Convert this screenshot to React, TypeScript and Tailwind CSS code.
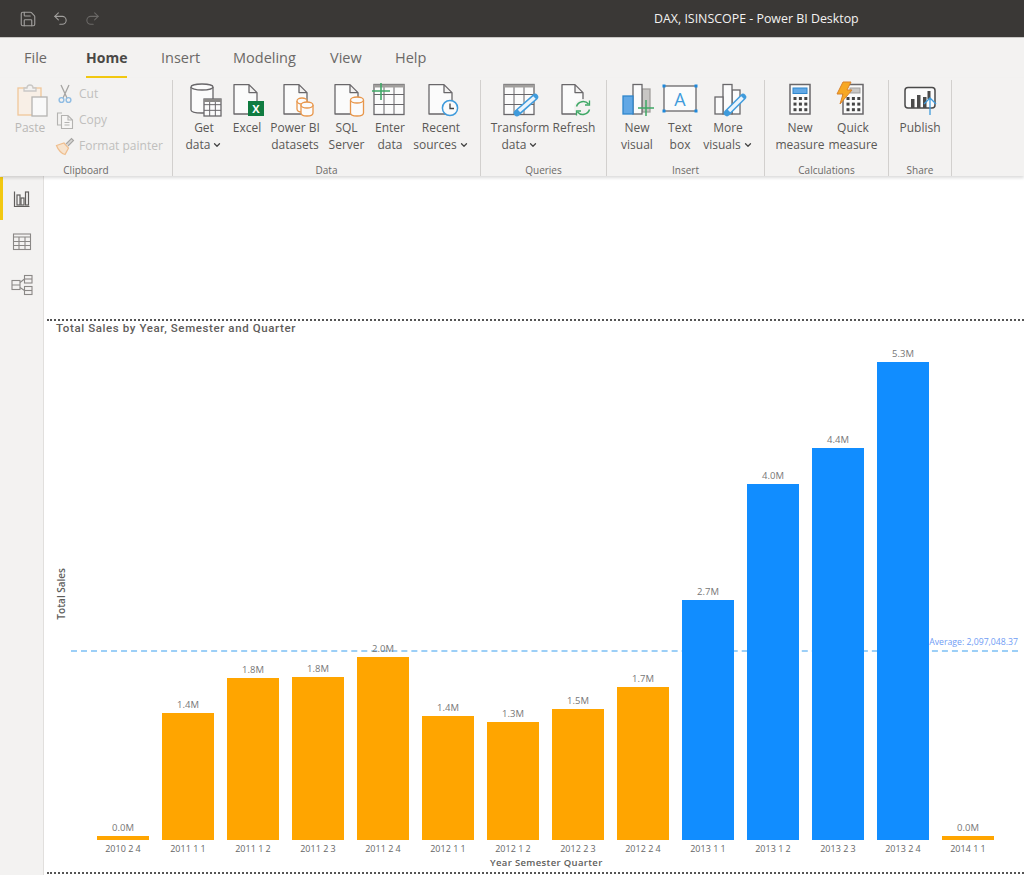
import type { ReactNode } from 'react'
import { ChevronDown, Redo2, Save, Undo2 } from 'lucide-react'

const tabs = [
  { label: 'File', width: 'w-[62px]' },
  { label: 'Home', width: 'w-[75px]', active: true },
  { label: 'Insert', width: 'w-[72px]' },
  { label: 'Modeling', width: 'w-[97px]' },
  { label: 'View', width: 'w-[65px]' },
  { label: 'Help', width: 'w-[60px]' },
]

const bars = [
  { label: '2010 2 4', value: '0.0M', height: 4, color: 'bg-[#ffa500]' },
  { label: '2011 1 1', value: '1.4M', height: 127, color: 'bg-[#ffa500]' },
  { label: '2011 1 2', value: '1.8M', height: 162, color: 'bg-[#ffa500]' },
  { label: '2011 2 3', value: '1.8M', height: 163, color: 'bg-[#ffa500]' },
  { label: '2011 2 4', value: '2.0M', height: 183, color: 'bg-[#ffa500]' },
  { label: '2012 1 1', value: '1.4M', height: 124, color: 'bg-[#ffa500]' },
  { label: '2012 1 2', value: '1.3M', height: 118, color: 'bg-[#ffa500]' },
  { label: '2012 2 3', value: '1.5M', height: 131, color: 'bg-[#ffa500]' },
  { label: '2012 2 4', value: '1.7M', height: 153, color: 'bg-[#ffa500]' },
  { label: '2013 1 1', value: '2.7M', height: 240, color: 'bg-[#118dff]' },
  { label: '2013 1 2', value: '4.0M', height: 356, color: 'bg-[#118dff]' },
  { label: '2013 2 3', value: '4.4M', height: 392, color: 'bg-[#118dff]' },
  { label: '2013 2 4', value: '5.3M', height: 478, color: 'bg-[#118dff]' },
  { label: '2014 1 1', value: '0.0M', height: 4, color: 'bg-[#ffa500]' },
]

const GRAY = '#69676a'
const ORANGE = '#e8964a'
const BLUE = '#3f9bdc'
const GREEN = '#3fa866'

function Icon({ children }: { children: ReactNode }) {
  return (
    <svg width="40" height="36" viewBox="0 0 40 36" fill="none" strokeWidth="1.3">
      {children}
    </svg>
  )
}

// page with a folded corner, x/w in icon units
function Doc({ x, w }: { x: number; w: number }) {
  const r = x + w
  return (
    <path
      d={`M${x} 3.6H${r - 8}L${r} 11.6V33H${x}ZM${r - 8} 3.6V11.6H${r}`}
      fill="#fbfbfb"
      stroke={GRAY}
      strokeLinejoin="round"
    />
  )
}

function Cyl({ x, y, w, h, color }: { x: number; y: number; w: number; h: number; color: string }) {
  const rx = w / 2
  return (
    <>
      <path
        d={`M${x} ${y + 3}V${y + h - 3}C${x} ${y + h + 1} ${x + w} ${y + h + 1} ${x + w} ${y + h - 3}V${y + 3}`}
        fill="#fbfbfb"
        stroke={color}
      />
      <ellipse cx={x + rx} cy={y + 3} rx={rx} ry={3} fill="#fbfbfb" stroke={color} />
    </>
  )
}

function Grid({ x, y, w, h, cols, rows }: { x: number; y: number; w: number; h: number; cols: number; rows: number }) {
  const lines = []
  for (let i = 1; i < cols; i++) {
    const cx = x + (w * i) / cols
    lines.push(<path key={`c${i}`} d={`M${cx} ${y}V${y + h}`} stroke={GRAY} strokeWidth="1" />)
  }
  for (let i = 1; i < rows; i++) {
    const cy = y + (h * i) / rows
    lines.push(<path key={`r${i}`} d={`M${x} ${cy}H${x + w}`} stroke={GRAY} strokeWidth="1" />)
  }
  return (
    <>
      <rect x={x} y={y} width={w} height={h} fill="#fbfbfb" stroke={GRAY} />
      {lines}
    </>
  )
}

function Pencil({ x1, y1, x2, y2 }: { x1: number; y1: number; x2: number; y2: number }) {
  return (
    <>
      <path d={`M${x1} ${y1}L${x2} ${y2}`} stroke={BLUE} strokeWidth="6.5" strokeLinecap="round" />
      <path d={`M${x1 - 0.5} ${y1 + 0.5}L${x2 + 2} ${y2 - 2}`} stroke="#eaf4fc" strokeWidth="3.6" />
      <path d={`M${x2 + 3} ${y2 + 1}L${x2 - 2} ${y2 + 2}L${x2 - 1} ${y2 - 3}Z`} fill={BLUE} />
    </>
  )
}

function CalcKeys({ x, y }: { x: number; y: number }) {
  const keys = []
  for (let r = 0; r < 3; r++) {
    for (let c = 0; c < 3; c++) {
      keys.push(<rect key={`${r}${c}`} x={x + c * 5.4} y={y + r * 5.6} width="3" height="3" fill="#444" />)
    }
  }
  return <>{keys}</>
}

function PasteIcon() {
  return (
    <Icon>
      <rect x="8" y="7" width="23" height="27" fill="#f8efe6" stroke="#f0c79a" />
      <path d="M14 10V7H17C17 3 23 3 23 7H26V10Z" fill="#f3f2f1" stroke="#c9c8c6" />
      <rect x="22" y="16" width="15" height="19" fill="#f9f9f9" stroke="#b4b3b1" />
    </Icon>
  )
}

function GetDataIcon() {
  return (
    <Icon>
      <Cyl x={7} y={3} w={22} h={29} color={GRAY} />
      <Grid x={20} y={18} w={17} h={17} cols={3} rows={3} />
      <rect x="20" y="18" width="17" height="3" fill="#8a8886" />
    </Icon>
  )
}

function ExcelIcon() {
  return (
    <Icon>
      <Doc x={7} w={23} />
      <rect x="21" y="20" width="16" height="15" fill="#107c41" />
      <text x="29" y="32" textAnchor="middle" fontSize="11" fontWeight="700" fill="#fff" fontFamily="'Open Sans', sans-serif">
        X
      </text>
    </Icon>
  )
}

function DatasetsIcon() {
  return (
    <Icon>
      <Doc x={9} w={23} />
      <Cyl x={22} y={17} w={10} h={14} color={ORANGE} />
      <Cyl x={26} y={21} w={12} h={14} color={ORANGE} />
    </Icon>
  )
}

function SqlIcon() {
  return (
    <Icon>
      <Doc x={8} w={23} />
      <Cyl x={23.5} y={16} w={13} h={19} color={ORANGE} />
    </Icon>
  )
}

function EnterIcon() {
  return (
    <Icon>
      <Grid x={4} y={3.5} w={30} h={30} cols={3} rows={3} />
      <rect x="4" y="3.5" width="30" height="3" fill="#a19f9d" />
      <path d="M2 10H20M11 2V19" stroke={GREEN} strokeWidth="1.6" />
    </Icon>
  )
}

function RecentIcon() {
  return (
    <Icon>
      <Doc x={8} w={23} />
      <circle cx="29" cy="27" r="7.6" fill="#fbfbfb" stroke={BLUE} strokeWidth="1.5" />
      <path d="M29 22.5V27.5H33" stroke="#444" />
    </Icon>
  )
}

function TransformIcon() {
  return (
    <Icon>
      <Grid x={4} y={3.5} w={30} h={30} cols={3} rows={3} />
      <rect x="4" y="3.5" width="30" height="3" fill="#a19f9d" />
      <Pencil x1={35} y1={16} x2={17} y2={32} />
    </Icon>
  )
}

function RefreshIcon() {
  return (
    <Icon>
      <Doc x={8} w={21} />
      <circle cx="29" cy="27" r="9" fill="#f3f2f1" />
      <path d="M22.5 25.5A7 7 0 0 1 34.5 23M35.5 28.5A7 7 0 0 1 23.5 31" stroke={GREEN} strokeWidth="1.5" />
      <path d="M35.5 19.5V24H31M22.5 34.5V30H27" stroke={GREEN} strokeWidth="1.3" />
    </Icon>
  )
}

function NewVisualIcon() {
  return (
    <Icon>
      <rect x="25" y="8" width="8" height="23" fill="#c8c6c4" stroke="#a19f9d" />
      <rect x="16" y="3.5" width="9" height="29.5" fill="#fbfbfb" stroke={GRAY} />
      <rect x="6" y="15" width="10" height="18" fill="#62a8e5" stroke="#2f86cc" />
      <path d="M21 27H37M29 19V35" stroke={GREEN} strokeWidth="1.5" />
    </Icon>
  )
}

function TextBoxIcon() {
  return (
    <Icon>
      <rect x="4" y="5" width="32" height="25" fill="#fbfbfb" stroke={GRAY} />
      <rect x="2.5" y="3.5" width="3" height="3" fill="#1c88dc" />
      <rect x="34.5" y="3.5" width="3" height="3" fill="#1c88dc" />
      <rect x="2.5" y="28.5" width="3" height="3" fill="#1c88dc" />
      <rect x="34.5" y="28.5" width="3" height="3" fill="#1c88dc" />
      <text x="20" y="25" textAnchor="middle" fontSize="18" fill={BLUE} fontFamily="'Open Sans', sans-serif">
        A
      </text>
    </Icon>
  )
}

function MoreVisualsIcon() {
  return (
    <Icon>
      <rect x="24" y="9" width="8" height="24" fill="#fbfbfb" stroke={GRAY} />
      <rect x="15" y="3.5" width="9" height="29.5" fill="#fbfbfb" stroke={GRAY} />
      <rect x="7" y="16" width="8" height="17" fill="#fbfbfb" stroke={GRAY} />
      <Pencil x1={35} y1={16} x2={19} y2={32} />
    </Icon>
  )
}

function NewMeasureIcon() {
  return (
    <Icon>
      <rect x="10" y="3.5" width="20" height="29.5" fill="#fbfbfb" stroke={GRAY} strokeWidth="1.5" />
      <rect x="13" y="7" width="14" height="5.5" fill="#62a8e5" stroke="#2f86cc" strokeWidth="1" />
      <CalcKeys x={13.5} y={16} />
    </Icon>
  )
}

function QuickMeasureIcon() {
  return (
    <Icon>
      <rect x="10" y="3.5" width="20" height="29.5" fill="#fbfbfb" stroke={GRAY} strokeWidth="1.5" />
      <rect x="17" y="7" width="10" height="5" fill="#c8c6c4" stroke="#a19f9d" strokeWidth="1" />
      <CalcKeys x={13.5} y={16} />
      <path d="M10 1H18L14 9H19L7 23L10 13H4Z" fill="#f7a823" stroke="#d9822b" strokeWidth="1" strokeLinejoin="round" />
    </Icon>
  )
}

function PublishIcon() {
  return (
    <Icon>
      <rect x="5" y="6.5" width="30" height="20.5" rx="3" fill="#fbfbfb" stroke="#4a4a4a" strokeWidth="1.5" />
      <rect x="11" y="18" width="3.5" height="9" fill="#4a4a4a" />
      <rect x="17" y="14" width="3.5" height="13" fill="#4a4a4a" />
      <rect x="23" y="16" width="3.5" height="11" fill="#4a4a4a" />
      <rect x="27.5" y="10" width="3" height="8" fill="#4a4a4a" />
      <path d="M30 34V17M24 23L30 17L36 23" stroke={BLUE} strokeWidth="1.3" fill="none" />
    </Icon>
  )
}

function CutIcon() {
  return (
    <svg width="20" height="20" viewBox="0 0 20 20" fill="none">
      <path d="M6 1L12 14M14 1L8 14" stroke="#a6a5a3" strokeWidth="1.3" />
      <circle cx="6.5" cy="16" r="2.4" stroke="#8fbce3" strokeWidth="1.4" />
      <circle cx="13.5" cy="16" r="2.4" stroke="#8fbce3" strokeWidth="1.4" />
    </svg>
  )
}

function CopyIcon() {
  return (
    <svg width="20" height="20" viewBox="0 0 20 20" fill="none" stroke="#b4b3b1" strokeWidth="1.1">
      <path d="M7 3H2.5V15H6" />
      <path d="M6.5 5.5H13L17.5 10V18.5H6.5ZM13 5.5V10H17.5M9.5 12.5H14.5M9.5 15H14.5" fill="#f7f6f5" />
    </svg>
  )
}

function PainterIcon() {
  return (
    <svg width="20" height="20" viewBox="0 0 20 20" fill="none">
      <path d="M1.5 9.5L9 7L13.5 12L10 18.5C7 18 3 14 1.5 9.5Z" fill="#f7e3cd" stroke="#efbe8e" strokeWidth="1.2" />
      <path d="M11 8L16.5 2.5L18.5 4.5L13 10" fill="#d8d7d5" stroke="#a6a5a3" strokeWidth="1.1" />
    </svg>
  )
}

function ReportViewIcon() {
  return (
    <svg width="20" height="20" viewBox="0 0 20 20" fill="none" stroke="#605e5c" strokeWidth="1.2">
      <path d="M2.5 2.5V17.5H17.5" />
      <rect x="5" y="6" width="3" height="10" />
      <rect x="9" y="9" width="3" height="7" />
      <rect x="13.5" y="3" width="3" height="13" />
    </svg>
  )
}

function DataViewIcon() {
  return (
    <svg width="20" height="20" viewBox="0 0 20 20" fill="none" stroke="#8a8886" strokeWidth="1.1">
      <rect x="1.5" y="2" width="17" height="15.5" />
      <path d="M1.5 5H18.5M1.5 9.5H18.5M1.5 13.5H18.5M7 5V17.5M13 5V17.5" />
    </svg>
  )
}

function ModelViewIcon() {
  return (
    <svg width="22" height="22" viewBox="0 0 22 22" fill="none" stroke="#8a8886" strokeWidth="1.1">
      <rect x="1" y="6.5" width="8" height="9" />
      <path d="M1 11H9M9 8.5L13.5 5M9 13.5L13.5 16.5" />
      <rect x="13.5" y="1.5" width="7.5" height="7.5" />
      <path d="M13.5 5H21" />
      <rect x="13.5" y="12.5" width="7.5" height="8" />
      <path d="M13.5 16.5H21" />
    </svg>
  )
}

function RibbonButton({
  width,
  icon,
  lines,
  chevron,
  disabled,
}: {
  width: string
  icon: ReactNode
  lines: string[]
  chevron?: boolean
  disabled?: boolean
}) {
  return (
    <div className={`flex shrink-0 flex-col items-center ${width}`}>
      {icon}
      <div className={`mt-[2px] text-center text-[12px] leading-[17px] whitespace-nowrap ${disabled ? 'text-[#b9b8b6]' : 'text-[#5a5856]'}`}>
        {lines.map((line, i) => (
          <div key={line} className="flex items-center justify-center">
            {line}
            {chevron && i === lines.length - 1 && <ChevronDown size={10} strokeWidth={3} className="ml-[2px] text-[#444]" />}
          </div>
        ))}
      </div>
    </div>
  )
}

function RibbonGroup({ width, padding, label, children }: { width: string; padding: string; label: string; children: ReactNode }) {
  return (
    <div className={`flex h-[96px] shrink-0 flex-col border-r border-[#d2d0ce] ${width}`}>
      <div className={`flex flex-1 pt-[1px] ${padding}`}>{children}</div>
      <div className="h-[12px] text-center text-[10px] leading-[12px] text-[#6b6967]">{label}</div>
    </div>
  )
}

function ClipboardRow({ icon, label }: { icon: ReactNode; label: string }) {
  return (
    <div className="flex h-[26px] items-center gap-[4px] text-[12px] whitespace-nowrap text-[#c0bfbd]">
      {icon}
      {label}
    </div>
  )
}

function Chart() {
  return (
    <div className="relative flex h-[500px]">
      {/* average line sits behind the bars */}
      <div className="absolute top-[310px] right-[6px] left-[24px] border-t-2 border-dashed border-[#9ccff7]" />

      <div className="flex w-[50px] shrink-0 flex-col items-start justify-end">
        <div className="mb-[220px] ml-[9px] text-[10px] leading-[11px] font-semibold text-[#605e5c] [writing-mode:vertical-rl] rotate-180">
          Total Sales
        </div>
      </div>

      <div className="relative flex items-end gap-[13px]">
        {bars.map((bar) => (
          <div key={bar.label} className="flex w-[52px] flex-col items-center">
            <span className="mb-[1px] text-[9.5px] leading-[14px] text-[#777]">{bar.value}</span>
            <div className={`w-full ${bar.color}`} style={{ height: bar.height }} />
          </div>
        ))}
      </div>

      <div className="absolute top-[295px] right-[6px] text-[8.7px] leading-[14px] whitespace-nowrap text-[#6f9df5]">Average: 2,097,048.37</div>
    </div>
  )
}

export default function App() {
  return (
    <div className="h-[875px] w-[1024px] overflow-hidden bg-white font-['Open_Sans','Noto_Sans',sans-serif]">
      {/* title bar */}
      <div className="flex h-[38px] items-center border-b border-[#c8c6c4] bg-[#3a3836] pl-[19px] text-[#a19f9d]">
        <Save size={18} strokeWidth={1.5} />
        <Undo2 size={17} strokeWidth={1.5} className="ml-[15px]" />
        <Redo2 size={17} strokeWidth={1.5} className="ml-[15px] text-[#6b6967]" />
        <span className="ml-[553px] pt-[2px] text-[12.4px] whitespace-nowrap text-[#f3f2f1]">DAX, ISINSCOPE - Power BI Desktop</span>
      </div>

      {/* tabs */}
      <div className="flex h-[40px] bg-[#f3f2f1] pl-[24px]">
        {tabs.map((tab) => (
          <div key={tab.label} className={`pt-[7px] ${tab.width}`}>
            <span
              className={`inline-block h-[31px] border-b-[3px] leading-[20px] ${
                tab.active ? 'border-[#f2c811] text-[14px] font-bold text-[#4a4846]' : 'border-transparent text-[14.5px] text-[#6b6967]'
              }`}
            >
              {tab.label}
            </span>
          </div>
        ))}
      </div>

      {/* ribbon */}
      <div className="relative z-10 flex h-[98px] bg-[#f3f2f1] pt-[2px] shadow-[0_2px_3px_rgba(0,0,0,0.14)]">
        <RibbonGroup width="w-[173px]" padding="pl-[10px]" label="Clipboard">
          <RibbonButton width="w-[40px]" icon={<PasteIcon />} lines={['Paste']} disabled />
          <div className="ml-[5px] flex flex-col">
            <ClipboardRow icon={<CutIcon />} label="Cut" />
            <ClipboardRow icon={<CopyIcon />} label="Copy" />
            <ClipboardRow icon={<PainterIcon />} label="Format painter" />
          </div>
        </RibbonGroup>
        <RibbonGroup width="w-[308px]" padding="pl-[8px]" label="Data">
          <RibbonButton width="w-[46px]" icon={<GetDataIcon />} lines={['Get', 'data']} chevron />
          <RibbonButton width="w-[40px]" icon={<ExcelIcon />} lines={['Excel']} />
          <RibbonButton width="w-[56px]" icon={<DatasetsIcon />} lines={['Power BI', 'datasets']} />
          <RibbonButton width="w-[47px]" icon={<SqlIcon />} lines={['SQL', 'Server']} />
          <RibbonButton width="w-[40px]" icon={<EnterIcon />} lines={['Enter', 'data']} />
          <RibbonButton width="w-[62px]" icon={<RecentIcon />} lines={['Recent', 'sources']} chevron />
        </RibbonGroup>
        <RibbonGroup width="w-[126px]" padding="pl-[10px]" label="Queries">
          <RibbonButton width="w-[58px]" icon={<TransformIcon />} lines={['Transform', 'data']} chevron />
          <RibbonButton width="w-[50px]" icon={<RefreshIcon />} lines={['Refresh']} />
        </RibbonGroup>
        <RibbonGroup width="w-[158px]" padding="pl-[10px]" label="Insert">
          <RibbonButton width="w-[40px]" icon={<NewVisualIcon />} lines={['New', 'visual']} />
          <RibbonButton width="w-[46px]" icon={<TextBoxIcon />} lines={['Text', 'box']} />
          <RibbonButton width="w-[50px]" icon={<MoreVisualsIcon />} lines={['More', 'visuals']} chevron />
        </RibbonGroup>
        <RibbonGroup width="w-[124px]" padding="pl-[10px]" label="Calculations">
          <RibbonButton width="w-[50px]" icon={<NewMeasureIcon />} lines={['New', 'measure']} />
          <RibbonButton width="w-[56px]" icon={<QuickMeasureIcon />} lines={['Quick', 'measure']} />
        </RibbonGroup>
        <RibbonGroup width="w-[63px]" padding="pl-[8px]" label="Share">
          <RibbonButton width="w-[46px]" icon={<PublishIcon />} lines={['Publish']} />
        </RibbonGroup>
      </div>

      <div className="flex h-[699px]">
        {/* view switcher */}
        <div className="w-[44px] shrink-0 border-r border-[#e1dfdd] bg-[#f3f2f1] pt-[1px]">
          <div className="flex h-[43px] items-center justify-center border-l-[3px] border-[#f2c811] pr-[3px]">
            <ReportViewIcon />
          </div>
          <div className="flex h-[43px] items-center justify-center">
            <DataViewIcon />
          </div>
          <div className="flex h-[43px] items-center justify-center">
            <ModelViewIcon />
          </div>
        </div>

        {/* canvas */}
        <div className="flex-1 pt-[143px] pl-[3px]">
          <div className="h-[555px] border-y-2 border-dotted border-[#555]">
            <div className="pl-[9px] font-['Roboto',sans-serif] text-[11.5px] leading-[14px] font-medium tracking-[0.6px] text-[#5f5d5b]">
              Total Sales by Year, Semester and Quarter
            </div>
            <div className="pt-[5px]">
              <Chart />
            </div>
            <div className="flex gap-[13px] pl-[50px]">
              {bars.map((bar) => (
                <div key={bar.label} className="w-[52px] pt-[2px] text-center text-[9px] leading-[14px] whitespace-nowrap text-[#666]">
                  {bar.label}
                </div>
              ))}
            </div>
            <div className="pl-[443px] text-[9.5px] leading-[13px] font-semibold tracking-[0.35px] text-[#605e5c]">Year Semester Quarter</div>
          </div>
        </div>
      </div>
    </div>
  )
}
